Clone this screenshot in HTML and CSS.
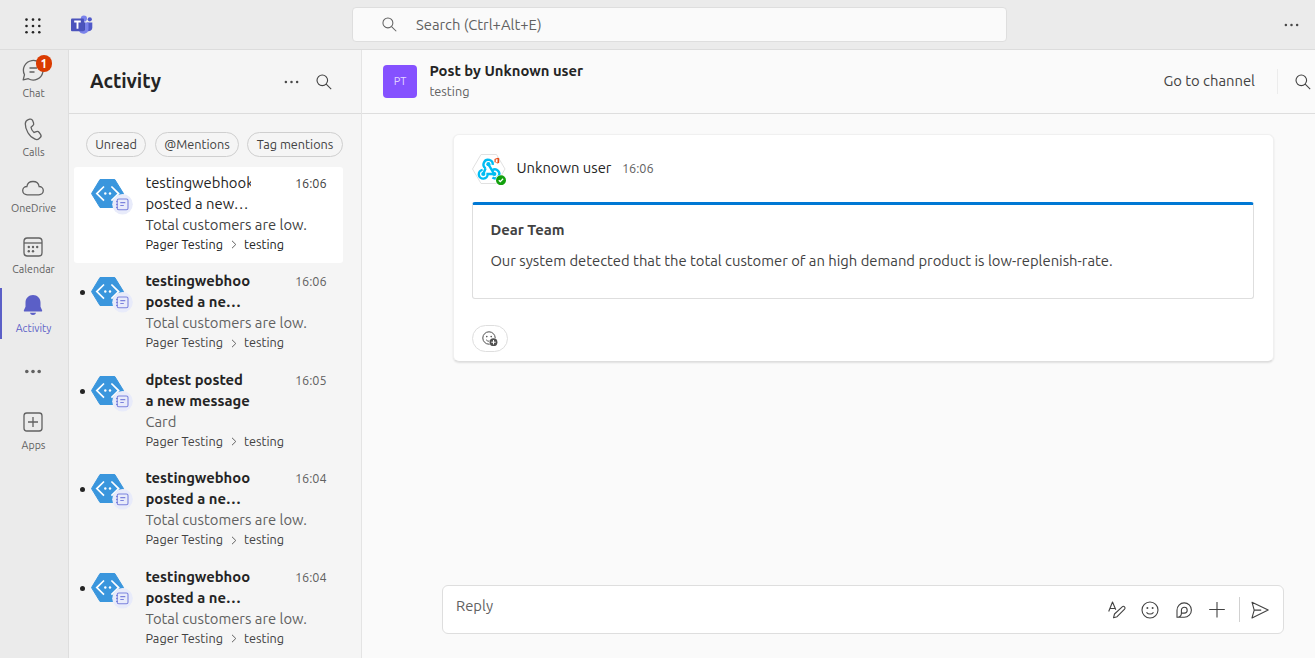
FILE: index.html
```html
<!DOCTYPE html>
<html lang="en">
<head>
<meta charset="utf-8">
<title>Activity</title>
<link rel="stylesheet" href="styles.css">
</head>
<body>
<svg class="defs" width="0" height="0" aria-hidden="true">
  <symbol id="search" viewBox="0 0 16 16"><circle cx="6.3" cy="6.3" r="5.3"/><path d="M10.2 10.2l5 5"/></symbol>
  <symbol id="dots" viewBox="0 0 16 4"><g class="solid"><circle cx="2" cy="2" r="1.35"/><circle cx="8" cy="2" r="1.35"/><circle cx="14" cy="2" r="1.35"/></g></symbol>
  <symbol id="bot" viewBox="0 0 42 38">
    <path d="M9 1.500h14.800L32.500 15.600 23.800 29.500H9L.5 15.600z" fill="#3a96dd" stroke="#3a96dd" stroke-width="1" stroke-linejoin="round"/>
    <path d="M13 8.500L5.800 15.600l7.200 7M20.400 8.500l7.200 7.100-7.200 7" fill="none" stroke="#fff" stroke-width="1.700"/>
    <circle cx="14.300" cy="15.500" r="1.200" fill="#fff"/><circle cx="19" cy="15.500" r="1.200" fill="#fff"/>
    <circle cx="31.500" cy="26.300" r="10.300" fill="#e8ebfa"/>
    <g fill="none" stroke="#7b83dd" stroke-width="1.100"><rect x="26.200" y="21" width="10.800" height="10.800" rx="1.600"/><path d="M29.300 24.600h5M29.300 27.500h3.500M25 23.500h2M25 26.500h2M25 29.500h2"/></g>
  </symbol>
</svg>
<div class="app">
  <header class="topbar">
    <svg class="waffle" width="18" height="18" viewBox="0 0 18 18"><g fill="#242424"><circle cx="2.5" cy="2.6" r="1.3"/><circle cx="9" cy="2.6" r="1.3"/><circle cx="15.3" cy="2.6" r="1.3"/><circle cx="2.5" cy="9" r="1.3"/><circle cx="9" cy="9" r="1.3"/><circle cx="15.3" cy="9" r="1.3"/><circle cx="2.5" cy="15.3" r="1.3"/><circle cx="9" cy="15.3" r="1.3"/><circle cx="15.3" cy="15.3" r="1.3"/></g></svg>
    <svg class="logo" width="22" height="20" viewBox="0 0 22 20">
      <circle cx="18.8" cy="4.3" r="2.1" fill="#5059c9"/><path d="M16 7.4h5.3v5.3a3.5 3.5 0 0 1-5.3 3z" fill="#5059c9"/>
      <circle cx="12.9" cy="3.6" r="3.1" fill="#7b83eb"/><path d="M8 7.4h9.5v6.600a5 5 0 0 1-9.500 2z" fill="#7b83eb"/>
      <path d="M9 7.4h5v8.200H8.300z" fill="#4651b2"/><rect x="0" y="3.500" width="13" height="12.700" rx="1" fill="#4b53bc"/>
      <path d="M3.200 6.500h6.600M6.500 6.500v7.200" stroke="#fff" stroke-width="1.900"/>
    </svg>
    <div class="search"><svg class="ico" width="15" height="15"><use href="#search"/></svg><span class="search-text">Search (Ctrl+Alt+E)</span></div>
    <svg class="ico top-more" width="15" height="4"><use href="#dots"/></svg>
  </header>
  <div class="body">
    <nav class="rail">
      <a class="nav chat"><svg class="ico" width="24" height="24" viewBox="0 0 24 24"><path d="M2.2 21.8l1.3-5.1A9.8 9.8 0 1 1 7.3 20.7z" stroke-linejoin="round"/><path d="M8.5 10h7.5M8.5 14h5"/></svg><span>Chat</span><b class="badge">1</b></a>
      <a class="nav calls"><svg class="ico" width="24" height="24" viewBox="0 0 24 24"><path d="M7.3 2.6l1.4-.4c1.3-.4 2.4.2 2.9 1.4l.9 2.1c.4 1 .2 2.1-.6 2.9L10 10.2c.2 1.8 1.6 4 3 5.2l2.4-.8c1-.3 2.1 0 2.8.9l1.3 1.8c.8 1.1.7 2.4-.3 3.3l-1 .9c-1.1 1-2.7 1.3-4.1.7C8.200 19.800 4.200 12.500 4.300 6.800c.1-2 1.200-3.700 3-4.200z"/></svg><span>Calls</span></a>
      <a class="nav drive"><svg class="ico" width="24" height="18" viewBox="0 0 24 18"><path d="M6.200 15.800C3.600 15.800 1.700 14 1.700 11.600s1.900-4.100 4.200-4.100C6.300 4.400 8.800 2.500 12 2.500s5.700 1.900 6.100 5c2.300 0 4.200 1.700 4.200 4.100s-1.900 4.200-4.500 4.200z"/></svg><span>OneDrive</span></a>
      <a class="nav calendar"><svg class="ico" width="24" height="24" viewBox="0 0 24 24"><rect x="3" y="3" width="18" height="18" rx="3.200"/><path d="M3 8h18"/><g class="solid"><circle cx="7.800" cy="12" r="1.200"/><circle cx="12" cy="12" r="1.200"/><circle cx="16.200" cy="12" r="1.200"/><circle cx="7.800" cy="16.300" r="1.200"/><circle cx="12" cy="16.300" r="1.200"/></g></svg><span>Calendar</span></a>
      <a class="nav activity"><svg width="24" height="24" viewBox="0 0 24 24" fill="#5b5fc7"><path d="M12 2C7.700 2 4.500 5.300 4.500 9.400v4.300L2.900 17.300c-.3.700.1 1.300.8 1.300h16.600c.7 0 1.100-.6.800-1.300l-1.600-3.600V9.400C19.500 5.300 16.300 2 12 2zM9 19.800c.4 1.400 1.500 2.200 3 2.200s2.600-.8 3-2.200z"/></svg><span>Activity</span></a>
      <a class="nav more"><svg class="ico" width="18" height="5" viewBox="0 0 18 5"><g class="solid"><circle cx="2.800" cy="2.500" r="1.800"/><circle cx="9" cy="2.500" r="1.800"/><circle cx="15.200" cy="2.500" r="1.800"/></g></svg></a>
      <a class="nav apps"><svg class="ico" width="24" height="24" viewBox="0 0 24 24"><rect x="3" y="3" width="18" height="18" rx="2.800"/><path d="M12 7v10M7 12h10"/></svg><span>Apps</span></a>
    </nav>
    <section class="panel">
      <div class="panel-head"><h1>Activity</h1><svg class="ico dark" width="15" height="4"><use href="#dots"/></svg><svg class="ico dark" width="16" height="16"><use href="#search"/></svg></div>
      <div class="filters"><button class="f1">Unread</button><button class="f2">@Mentions</button><button class="f3">Tag mentions</button></div>
      <div class="list">
        <article class="item selected"><i class="dot"></i><svg class="bot" width="42" height="38"><use href="#bot"/></svg><div class="copy"><div class="title">testingwebhook</div><div class="title">posted a new…</div><div class="preview">Total customers are low.</div><div class="path"><span>Pager Testing</span><svg width="6" height="9" viewBox="0 0 6 9"><path d="M1 .8l3.800 3.700L1 8.200"/></svg><span>testing</span></div></div><time>16:06</time></article>
        <article class="item"><i class="dot"></i><svg class="bot" width="42" height="38"><use href="#bot"/></svg><div class="copy"><div class="title">testingwebhoo</div><div class="title">posted a ne…</div><div class="preview">Total customers are low.</div><div class="path"><span>Pager Testing</span><svg width="6" height="9" viewBox="0 0 6 9"><path d="M1 .8l3.800 3.700L1 8.200"/></svg><span>testing</span></div></div><time>16:06</time></article>
        <article class="item"><i class="dot"></i><svg class="bot" width="42" height="38"><use href="#bot"/></svg><div class="copy"><div class="title">dptest posted</div><div class="title">a new message</div><div class="preview">Card</div><div class="path"><span>Pager Testing</span><svg width="6" height="9" viewBox="0 0 6 9"><path d="M1 .8l3.800 3.700L1 8.200"/></svg><span>testing</span></div></div><time>16:05</time></article>
        <article class="item"><i class="dot"></i><svg class="bot" width="42" height="38"><use href="#bot"/></svg><div class="copy"><div class="title">testingwebhoo</div><div class="title">posted a ne…</div><div class="preview">Total customers are low.</div><div class="path"><span>Pager Testing</span><svg width="6" height="9" viewBox="0 0 6 9"><path d="M1 .8l3.800 3.700L1 8.200"/></svg><span>testing</span></div></div><time>16:04</time></article>
        <article class="item"><i class="dot"></i><svg class="bot" width="42" height="38"><use href="#bot"/></svg><div class="copy"><div class="title">testingwebhoo</div><div class="title">posted a ne…</div><div class="preview">Total customers are low.</div><div class="path"><span>Pager Testing</span><svg width="6" height="9" viewBox="0 0 6 9"><path d="M1 .8l3.800 3.700L1 8.200"/></svg><span>testing</span></div></div><time>16:04</time></article>
      </div>
    </section>
    <main class="main">
      <div class="main-head">
        <div class="team">PT</div>
        <div class="heading"><h2>Post by Unknown user</h2><p>testing</p></div>
        <span class="go">Go to channel</span><i class="sep"></i>
        <svg class="ico dark" width="16" height="16"><use href="#search"/></svg>
      </div>
      <div class="stage">
        <section class="post">
          <div class="author">
            <svg width="34" height="32" viewBox="0 0 34 32">
              <path d="M9 1.500h15.500L33 16l-8.500 14.500H9L.5 16z" fill="#fff" stroke="#e1e1e1"/>
              <g fill="none" stroke="#00bcf2" stroke-width="2.400"><path d="M13.600 15.200a4.600 4.600 0 1 1 7.100-3.300"/><path d="M16.500 11.300l5.300 9.200M13.600 15.200l-2.300 5.800"/><path d="M10.600 16.900a4.400 4.400 0 1 0 5 4.100h6.500"/><path d="M20.200 17.300a4.400 4.400 0 1 1 .2 7.200"/></g>
              <g fill="#00bcf2"><circle cx="16.400" cy="11.200" r="2.100"/><circle cx="11.300" cy="21" r="2.100"/><circle cx="22.300" cy="21" r="2.100"/></g>
              <path d="M22.500 6l3.200-1.300 1.500.5v4.600l-1.500.6-3.200-1.200 3 .3V6l-1.800.4v2.500l-1.200.4z" fill="#e64a19"/>
              <circle cx="29" cy="27.200" r="5.500" fill="#fff"/><circle cx="29" cy="27.200" r="5" fill="#13a10e"/><path d="M26.800 27.300l1.500 1.400 2.800-2.900" fill="none" stroke="#fff" stroke-width="1.300"/>
            </svg>
            <span class="name">Unknown user</span><span class="time">16:06</span>
          </div>
          <div class="card"><h3>Dear Team</h3><p>Our system detected that the total customer of an high demand product is low-replenish-rate.</p></div>
          <div class="react"><svg width="18" height="18" viewBox="0 0 18 18"><g fill="none" stroke="#505050"><circle cx="8" cy="8" r="6.200"/><path d="M5.200 9.800c1.500 1.900 3.800 1.900 5.300.1"/></g><g fill="#505050"><circle cx="5.800" cy="6.600" r=".8"/><circle cx="10.200" cy="6.600" r=".8"/></g><circle cx="12.500" cy="12.200" r="4.400" fill="#fff"/><circle cx="12.500" cy="12.200" r="3.900" fill="#505050"/><path d="M12.500 10v4.400M10.300 12.200h4.400" stroke="#fff"/></svg></div>
        </section>
        <div class="reply">
          <span class="placeholder">Reply</span>
          <div class="tools">
            <svg class="ico dark" width="20" height="20" viewBox="0 0 20 20"><path d="M1.700 11.500L5.500 2l3.300 7.700M3 8.500h4.800M6.500 17.800l1-3.800 7.700-7.200a1.700 1.700 0 0 1 2.400 2.400L10.100 16.700z" stroke-linejoin="round"/></svg>
            <svg class="ico dark" width="20" height="20" viewBox="0 0 20 20"><circle cx="10" cy="10" r="8"/><path d="M6.500 12.300c1.900 2.300 5.100 2.300 7 0"/><g class="solid"><circle cx="7.400" cy="8" r="1"/><circle cx="12.600" cy="8" r="1"/></g></svg>
            <svg class="ico dark" width="20" height="20" viewBox="0 0 20 20"><path d="M3 17.300V10.200A7.200 7.200 0 1 1 10.200 17.300zM4 17.200c2.500-.5 3.400-2 3.400-4V10.200a2.900 2.900 0 1 1 2.900 2.900H7.400"/></svg>
            <svg class="ico dark" width="20" height="20" viewBox="0 0 20 20"><path d="M10 2v15.500M2.200 9.500h15.600"/></svg>
            <i class="tool-sep"></i>
            <svg class="ico dark" width="20" height="20" viewBox="0 0 20 20"><path d="M2 2.200l16.200 7.900L2 17.900l2.200-7.800zM4.200 10.100h7" stroke-linejoin="round"/></svg>
          </div>
        </div>
      </div>
    </main>
  </div>
</div>
</body>
</html>
```

FILE: styles.css
```css
* { box-sizing: border-box; }
body { margin: 0; font-family: Ubuntu, "Noto Sans", sans-serif; color: #242424; }
h1, h2, h3, p { margin: 0; }
svg { display: block; flex: none; }
.defs { display: none; }
.ico { fill: none; stroke: #616161; stroke-width: 1.3; }
.ico.dark { stroke: #424242; stroke-width: 1.1; }
.solid { fill: #484848; stroke: none; }
.app { width: 1315px; height: 658px; display: flex; flex-direction: column; overflow: hidden; }

.topbar { height: 50px; flex: none; background: #ebebeb; border-bottom: 1px solid #dcdcdc; display: flex; align-items: center; padding-right: 16px; }
.waffle { margin: 2px 0 0 24px; }
.logo { margin-left: 29px; }
.search { width: 655px; height: 35px; margin-left: 259px; padding-left: 29px; display: flex; align-items: center; background: #fafafa; border: 1px solid #dedede; border-radius: 4px; }
.search-text { margin-left: 19px; font-size: 14.8px; color: #616161; }
.search .ico { stroke-width: 1.1; }
.top-more { margin-left: auto; }
.body { flex: 1; min-height: 0; display: flex; }

.rail { width: 69px; flex: none; background: #ebebeb; border-right: 1px solid #dedede; display: flex; flex-direction: column; }
.nav { display: flex; flex-direction: column; align-items: center; flex: none; padding-right: 1px; font-size: 10.6px; line-height: 14px; color: #616161; }
.nav .solid { fill: #616161; }
.nav svg { margin-right: 1px; }
.chat { position: relative; height: 59px; padding-top: 8px; }
.chat span { margin-top: 4px; }
.badge { position: absolute; left: 36px; top: 5px; width: 16px; height: 17px; border-radius: 9px; background: #da3b01; color: #fff; font-size: 12px; line-height: 17px; text-align: center; }
.calls { height: 60px; padding-top: 8px; }
.calls span { margin-top: 4px; }
.drive { height: 57px; padding-top: 10px; }
.drive span { margin-top: 4px; }
.calendar { height: 62px; padding-top: 9px; }
.calendar span { margin-top: 3px; }
.activity { height: 51px; padding: 5px 3px 0 0; margin-bottom: 30px; border-left: 2px solid #5b5fc7; color: #5b5fc7; }
.activity span { margin-top: 4px; }
.more { height: 41px; }
.apps span { margin-top: 4px; }

.panel { width: 293px; flex: none; background: #f5f5f5; border-right: 1px solid #e4e4e4; }
.panel-head { height: 64px; display: flex; align-items: center; padding: 0 29px 0 21px; border-bottom: 1px solid #dcdcdc; }
h1 { flex: 1; font-size: 19.4px; line-height: 26px; margin-top: -1px; }
.panel-head .ico:last-child { margin-left: 17px; }
.filters { display: flex; gap: 8px; padding: 18px 0 0 17px; }
.filters button { height: 25px; padding: 0 0 1px; border: 1px solid #cfcfcf; border-radius: 13px; background: none; font: 12.7px/21px Ubuntu, "Noto Sans", sans-serif; color: #424242; }
.filters .f1 { width: 60px; }
.filters .f2 { width: 84px; margin-left: 1px; }
.filters .f3 { width: 96px; }
.list { padding: 10px 0 0 5px; }
.item { width: 269px; height: 96px; margin-bottom: 2.5px; display: flex; border-radius: 3px; padding-top: 4.5px; }
.item.selected { background: #fff; }
.dot { width: 5px; height: 5px; margin: 20px 5px 0 6px; border-radius: 50%; background: #242424; }
.selected .dot { visibility: hidden; }
.bot { margin: 6px 0 0 1px; }
.copy { width: 149.5px; flex: none; margin-left: 12.4px; white-space: nowrap; }
.title { width: 106px; height: 21px; overflow: hidden; font-size: 14.8px; line-height: 21px; font-weight: 700; }
.selected .title { font-weight: 400; }
.preview { height: 21px; font-size: 14.8px; line-height: 21px; color: #616161; }
.path { display: flex; align-items: center; height: 17px; margin-top: 1px; font-size: 12.7px; line-height: 17px; color: #424242; }
.path svg { margin: 1px 7px 0 8px; fill: none; stroke: #616161; }
.selected .path { color: #242424; }
.selected .preview, .selected time { color: #424242; }
time { margin-top: 1px; font-size: 12.7px; line-height: 21px; color: #616161; }

.main { flex: 1; min-width: 0; display: flex; flex-direction: column; background: #fafafa; }
.main-head { height: 64px; flex: none; display: flex; align-items: center; padding: 0 5px 1px 21px; border-bottom: 1px solid #dedede; }
.team { width: 34px; height: 33px; margin-top: 1px; border-radius: 4px; background: #8551ff; color: #e5d9ff; font-size: 11px; line-height: 33px; text-align: center; }
.heading { margin-left: 12.4px; flex: 1; }
h2 { font-size: 14.8px; line-height: 20px; }
.heading p { font-size: 12.7px; line-height: 20px; color: #616161; }
.go { margin-top: -1px; font-size: 14.8px; color: #424242; }
.sep { width: 1px; height: 25px; margin: 0 17px 0 22px; background: #ececec; }
.main-head .ico { margin: 1px -1px 0 0; }
.stage { flex: 1; display: flex; flex-direction: column; justify-content: space-between; padding: 20px 31px 24px 80px; }
.post { height: 228px; margin: 0 10px 0 11px; padding: 18px 19px 0 18px; background: #fff; border-radius: 6px; border: 1px solid #f0f0f0; border-bottom-color: #dedede; box-shadow: 0 1px 2px #0000001c; }
.author { display: flex; height: 32px; }
.author .name { margin-left: 10.4px; font-size: 14.8px; line-height: 30px; }
.author .time { margin-left: 10.4px; font-size: 12.7px; line-height: 31px; color: #616161; }
.card { height: 97px; margin-top: 17px; padding: 15px 17px 0 17.4px; border: 1px solid #dedede; border-top: 3px solid #0078d4; border-radius: 3px; color: #424242; font-size: 14.8px; line-height: 20px; white-space: nowrap; }
h3 { font-size: 14.8px; line-height: 20px; }
.card p { margin-top: 11px; }
.react { width: 36px; height: 27px; margin-top: 26px; border: 1px solid #dedede; border-radius: 14px; display: flex; align-items: center; justify-content: center; }
.reply { height: 49px; display: flex; align-items: center; justify-content: space-between; padding: 0 13px 0 13px; background: #fff; border: 1px solid #dedede; border-radius: 6px; }
.placeholder { margin-top: -9px; font-size: 14.8px; color: #616161; }
.tools { display: flex; align-items: center; gap: 13.3px; }
.tools svg:nth-child(n+3):nth-child(-n+4) { margin-right: -.5px; margin-left: .5px; }
.tool-sep { width: 1px; height: 25px; margin: 0 -3px 0 -1px; background: #d1d1d1; }
```
